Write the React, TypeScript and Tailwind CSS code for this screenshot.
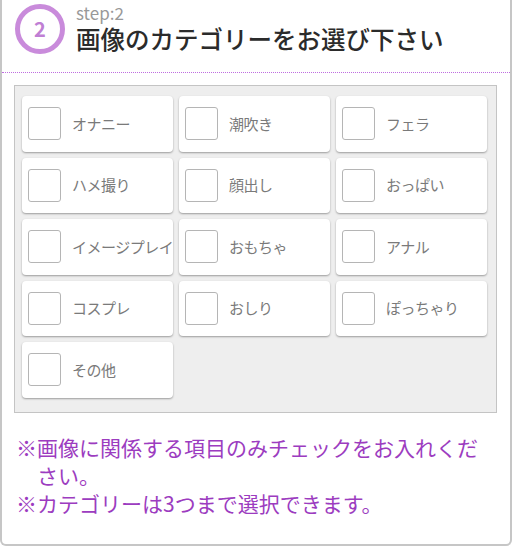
const categories = [
  'オナニー',
  '潮吹き',
  'フェラ',
  'ハメ撮り',
  '顔出し',
  'おっぱい',
  'イメージプレイ',
  'おもちゃ',
  'アナル',
  'コスプレ',
  'おしり',
  'ぽっちゃり',
  'その他',
]

const font = { fontFamily: '"Noto Sans CJK JP", "Noto Sans", sans-serif' }

export default function App() {
  return (
    <div className="w-[512px] h-[549px] bg-white" style={font}>
      <div className="h-[546px] border-x-2 border-b-2 border-[#c6c6c6] rounded-b-[6px]">
        {/* Header */}
        <div className="h-[73px] flex items-start border-b border-dotted border-[#bf6ee0]">
          <div className="ml-[13px] mt-[4px] w-[50px] h-[50px] rounded-full border-[5px] border-[#c98bdb] flex items-center justify-center">
            <span className="text-[20px] font-bold text-[#c07fd4] leading-none">2</span>
          </div>
          <div className="ml-[11px] flex flex-col">
            <span className="text-[17px] leading-[18px] text-[#999] mt-[4px]">step:2</span>
            <span className="text-[24.5px] leading-[28px] font-medium text-[#2b2b2b] mt-[3px]">
              画像のカテゴリーをお選び下さい
            </span>
          </div>
        </div>

        {/* Category box */}
        <div className="mt-[12px] ml-[12px] mr-[13px] border border-[#c4c4c4] bg-[#eeeeee] pt-[10px] pb-[14px] pl-[7px] pr-[9px]">
          <div className="grid grid-cols-3 gap-x-[6px] gap-y-[6px]">
            {categories.map((c) => (
              <div
                key={c}
                className="h-[55.5px] bg-white rounded-[4px] shadow-[0_1px_2px_rgba(0,0,0,0.35)] flex items-center overflow-hidden"
              >
                <div className="ml-[6px] w-[33px] h-[33px] shrink-0 border border-[#b5b5b5] rounded-[3px] bg-white" />
                <span className="ml-[11px] text-[15px] text-[#7a7a7a] whitespace-nowrap tracking-[-0.5px]">{c}</span>
              </div>
            ))}
          </div>
        </div>

        {/* Notes */}
        <div className="mt-[20px] ml-[14px] mr-[12px] text-[21px] leading-[28px] text-[#9c3cc0]">
          <p className="pl-[1em] -indent-[1em]">※画像に関係する項目のみチェックをお入れください。</p>
          <p className="pl-[1em] -indent-[1em]">※カテゴリーは3つまで選択できます。</p>
        </div>
      </div>
    </div>
  )
}
